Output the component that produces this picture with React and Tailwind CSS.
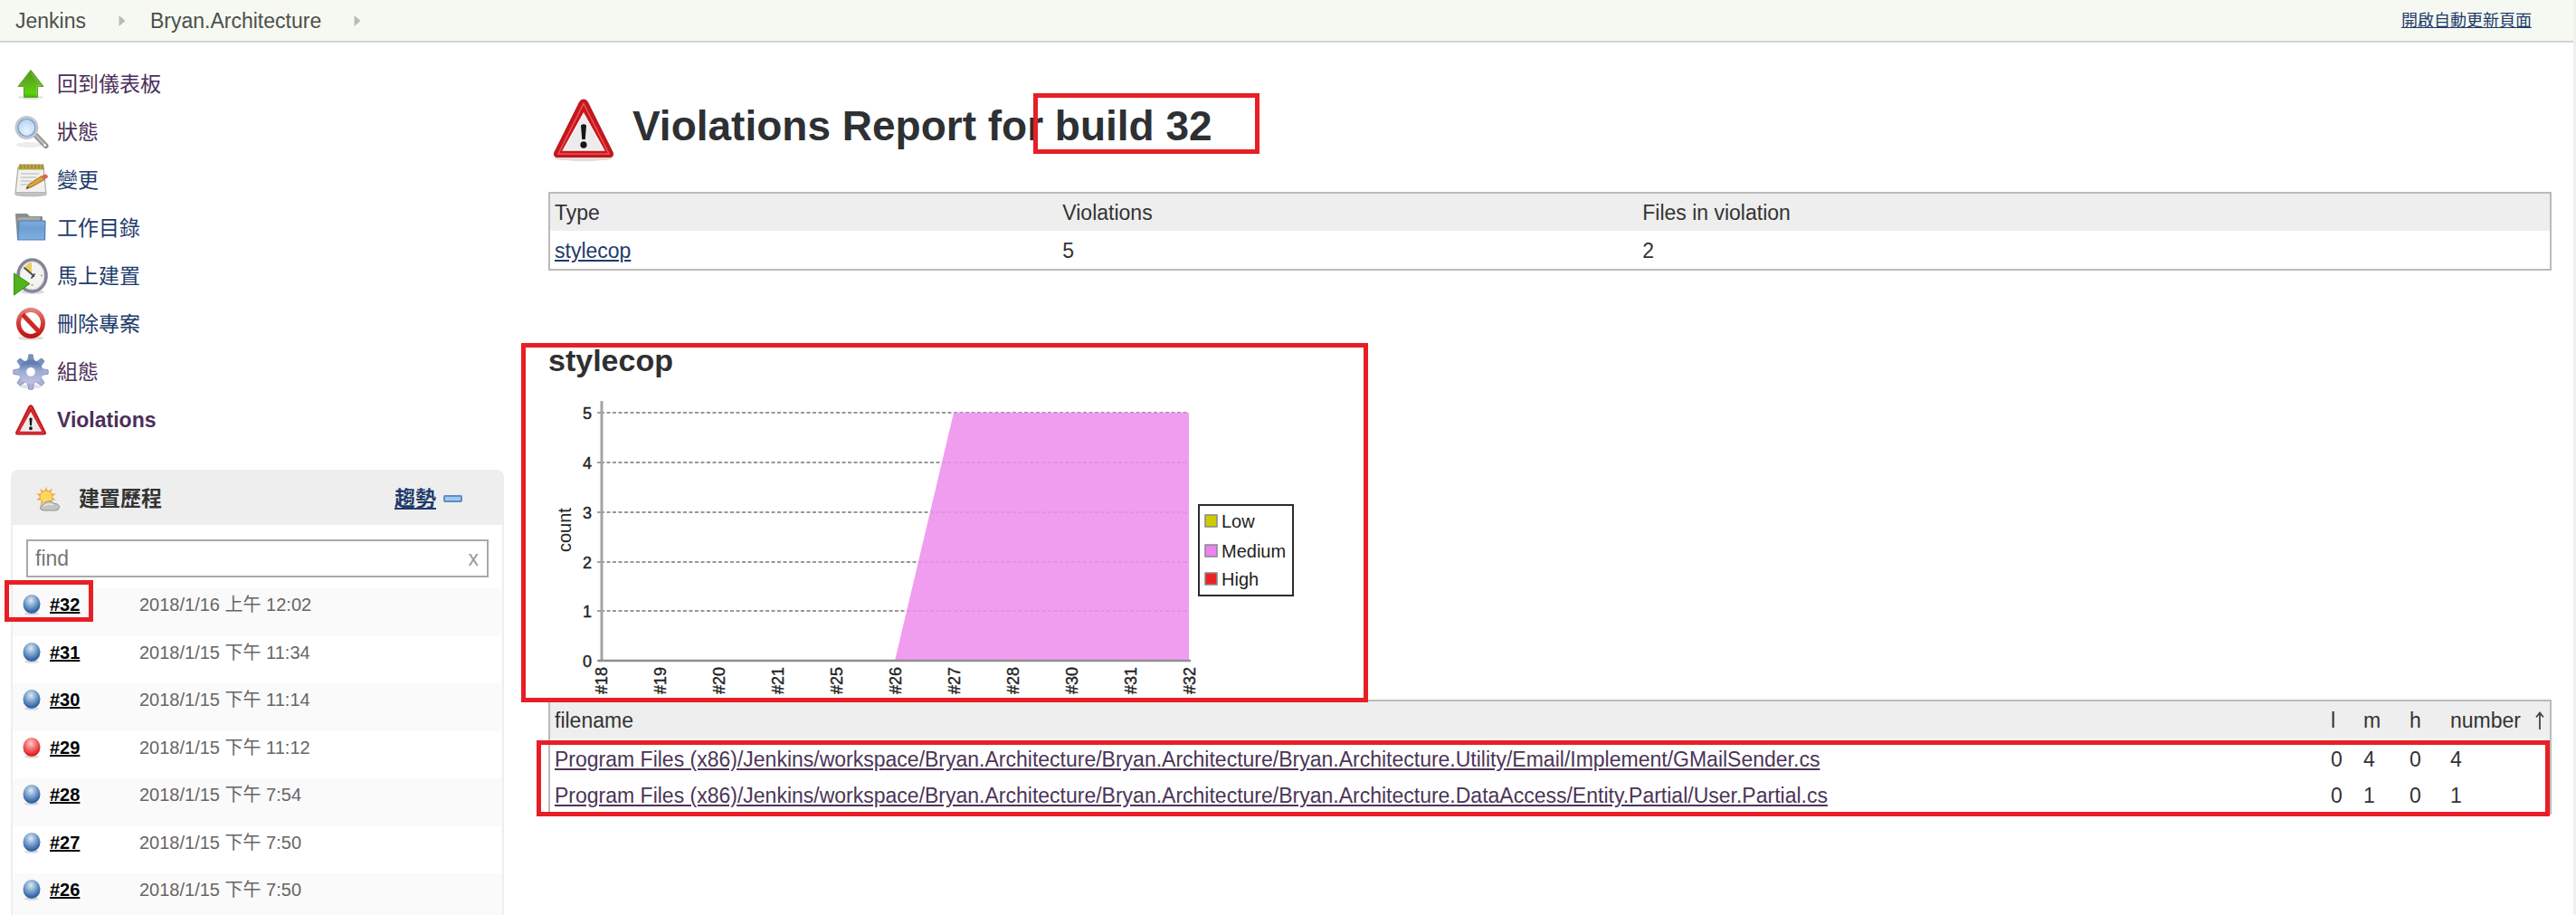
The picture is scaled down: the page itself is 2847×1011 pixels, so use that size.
import React from "react";

const SANS = "font-['Liberation_Sans','Noto_Sans_CJK_TC',sans-serif]";

/* ---------- icons ---------- */

function NavSvg({ children }) {
  return (
    <svg viewBox="0 0 38 40" className="h-10 w-[38px] shrink-0 overflow-visible" aria-hidden="true">
      {children}
    </svg>
  );
}

function UpIcon() {
  return (
    <NavSvg>
      <defs>
        <linearGradient id="up" x1="0" y1="0" x2="0" y2="1">
          <stop offset="0" stopColor="#4f9a16" />
          <stop offset="0.5" stopColor="#5fb31c" />
          <stop offset="0.85" stopColor="#5ad60c" />
          <stop offset="1" stopColor="#4aa80f" />
        </linearGradient>
      </defs>
      <ellipse cx="19" cy="34.500" rx="14" ry="2.500" fill="#e3e6df" />
      <path d="M19 4.500 33 22.500H26.500V34.500H11.500V22.500H5Z" fill="url(#up)" stroke="#5aa02c" strokeWidth="1" strokeLinejoin="round" />
      <path d="M19 7 30 21.500H25.500V33" fill="none" stroke="#8fd455" strokeWidth="1" opacity="0.7" />
    </NavSvg>
  );
}

function SearchIcon() {
  return (
    <NavSvg>
      <defs>
        <radialGradient id="lens" cx="0.5" cy="0.65" r="0.6">
          <stop offset="0" stopColor="#e9f3ff" />
          <stop offset="1" stopColor="#b3cff2" />
        </radialGradient>
      </defs>
      <ellipse cx="17" cy="34" rx="14" ry="3" fill="#ececec" />
      <path d="M24 23 35.500 35" stroke="#8d8d8d" strokeWidth="6" strokeLinecap="round" />
      <path d="M25 24 35 34.500" stroke="#b9bab8" strokeWidth="3" strokeLinecap="round" />
      <circle cx="34.500" cy="34.500" r="1.300" fill="#fff" />
      <circle cx="14.500" cy="15" r="11.500" fill="url(#lens)" stroke="#c3c7cc" strokeWidth="3" />
      <circle cx="14.500" cy="15" r="9.500" fill="none" stroke="#6f9bd1" strokeWidth="1.200" />
    </NavSvg>
  );
}

function NotepadIcon() {
  return (
    <NavSvg>
      <ellipse cx="19" cy="36.500" rx="15" ry="2" fill="#cfcfcb" />
      <path d="M5 6H33L36 35Q36 36.500 34.500 36.500H4Q2 36.500 2 35Z" fill="#f1f1ee" stroke="#a9aaa5" strokeWidth="1.200" />
      <path d="M2.500 33H35.500V35.500H2.500Z" fill="#b9bab5" />
      <path d="M6 2.500H33L34 8.500H5Z" fill="#b7a44b" />
      <path d="M8 2.500v5M12 2.500v5M16 2.500v5M20 2.500v5M24 2.500v5M28 2.500v5M32 2.500v5" stroke="#8f7d2c" strokeWidth="1" />
      <path d="M8 13H28M8 17H25M8 21H20M8 25H16" stroke="#c9c9c6" strokeWidth="1.300" />
      <path d="M14 29.500 17 24.500 31 15.500 34 19.500 20 27.500Z" fill="#e0a33c" stroke="#9c6b1a" strokeWidth="1" />
      <path d="M31 15.500 34.500 13.500Q38 13.500 38 17L34 19.500Z" fill="#d9655f" />
      <path d="M14 29.500 15.500 27 17 28.500Z" fill="#333" />
    </NavSvg>
  );
}

function FolderIcon() {
  return (
    <NavSvg>
      <defs>
        <linearGradient id="folder" x1="0" y1="0" x2="0" y2="1">
          <stop offset="0" stopColor="#7fabd9" />
          <stop offset="0.4" stopColor="#6d9fd3" />
          <stop offset="1" stopColor="#82b0de" />
        </linearGradient>
      </defs>
      <path d="M2 5Q2 4 3 4H15L18 7H31Q32 7 32 8V31H4Z" fill="#8b8d8a" />
      <path d="M5 8H29V14H5Z" fill="#a6a8a5" />
      <path d="M6 12H35L34.500 33H4.500Z" fill="url(#folder)" stroke="#4b7db8" strokeWidth="1.200" strokeLinejoin="round" />
    </NavSvg>
  );
}

function ClockIcon() {
  return (
    <NavSvg>
      <ellipse cx="21" cy="37.500" rx="13" ry="2.500" fill="#dcdcdc" />
      <ellipse cx="20.500" cy="19.500" rx="15.500" ry="17.500" fill="#f3f3ef" stroke="#83839a" strokeWidth="3.600" />
      <ellipse cx="20.500" cy="19.500" rx="13.300" ry="15.300" fill="none" stroke="#d6d6d6" strokeWidth="1" />
      <path d="M20 18 12 11Q15 5.500 20 5Z" fill="#e7cf5a" />
      <path d="M12 11 22.500 20M20 22 23 18" stroke="#4a4a4a" strokeWidth="1.800" strokeLinecap="round" />
      <circle cx="20.500" cy="30" r="1" fill="#999" />
      <circle cx="31" cy="19.500" r="1" fill="#999" />
      <path d="M0.500 17 18 28.500 0.500 41Z" fill="#4fb41c" stroke="#3c8d12" strokeWidth="1" />
    </NavSvg>
  );
}

function StopIcon() {
  return (
    <NavSvg>
      <defs>
        <linearGradient id="stop" x1="0" y1="0" x2="0" y2="1">
          <stop offset="0" stopColor="#e08078" />
          <stop offset="0.5" stopColor="#d23c38" />
          <stop offset="1" stopColor="#c31512" />
        </linearGradient>
      </defs>
      <ellipse cx="19" cy="35.500" rx="14" ry="2.500" fill="#dcdcdc" />
      <ellipse cx="19" cy="19" rx="13.500" ry="14.500" fill="#fff" stroke="url(#stop)" strokeWidth="5" />
      <path d="M10 9.500 28.500 29" stroke="#cb2a26" strokeWidth="5" />
    </NavSvg>
  );
}

function GearIcon() {
  const teeth = [0, 45, 90, 135, 180, 225, 270, 315];
  return (
    <NavSvg>
      <defs>
        <linearGradient id="gear" x1="0" y1="0" x2="0" y2="1">
          <stop offset="0" stopColor="#5f7fb2" />
          <stop offset="0.45" stopColor="#98acd3" />
          <stop offset="1" stopColor="#bcbcdf" />
        </linearGradient>
      </defs>
      <ellipse cx="19" cy="36" rx="12" ry="2.500" fill="#e2e2e2" />
      {teeth.map((a) => (
        <path
          key={a}
          d="M15.200 9 16.800 0.800H21.200L22.800 9Z"
          transform={`rotate(${a} 19 20)`}
          fill={a === 0 || a === 45 || a === 315 ? "#7690bf" : "#a9b1d8"}
          stroke="#7c8bb4"
          strokeWidth="0.800"
        />
      ))}
      <circle cx="19" cy="20" r="9.500" fill="none" stroke="url(#gear)" strokeWidth="8" />
      <circle cx="19" cy="20" r="5.300" fill="#fff" stroke="#8d99c2" strokeWidth="0.800" />
    </NavSvg>
  );
}

function WarningShape() {
  return (
    <>
      <path d="M34 7Q37 7 38.500 10L66 65Q68 70.500 63 70.500H5Q0 70.500 2 65L29.500 10Q31 7 34 7Z" fill="#c9161b" stroke="#a51216" strokeWidth="1" />
      <path d="M34 11.500 62 67H6Z" fill="none" stroke="#e4575a" strokeWidth="1.500" />
      <path d="M34 22.500 56.500 63H11.500Z" fill="#ececec" stroke="#f7f7f7" strokeWidth="1.500" />
      <path d="M31 35.500Q34 33 37 35.500L35.800 51H32.200Z" fill="#161616" />
      <ellipse cx="34" cy="57" rx="3.600" ry="3.800" fill="#161616" />
    </>
  );
}

function WarningIcon() {
  return (
    <NavSvg>
      <svg x="2" y="3" width="34" height="34" viewBox="1 6 66 66">
        <WarningShape />
      </svg>
    </NavSvg>
  );
}

function WarningLarge() {
  return (
    <svg viewBox="0 0 68 72" className="h-[72px] w-[68px] shrink-0 overflow-visible" aria-hidden="true">
      <ellipse cx="34" cy="72" rx="32" ry="3" fill="#ead9d9" />
      <WarningShape />
    </svg>
  );
}

function WeatherIcon() {
  const rays = [0, 36, 72, 108, 144, 180, 216, 252, 288, 324];
  return (
    <svg viewBox="0 0 28 28" className="h-7 w-7 shrink-0" aria-hidden="true">
      {rays.map((a) => (
        <path key={a} d="M11.500 5.500 13 0.500 14.500 5.500Z" transform={`rotate(${a} 13 12)`} fill="#f2a33a" />
      ))}
      <circle cx="13" cy="12" r="7" fill="#fbd860" stroke="#eda53b" strokeWidth="1" />
      <path d="M10 27Q6.500 27 6.500 23.500Q7 20.500 10.500 20.500Q12 16.500 16.500 17Q20 16 21.500 19.500Q27 19 27.500 23.500Q27 27 23.500 27Z" fill="#c4c5c1" stroke="#8e908c" strokeWidth="1" />
      <path d="M10 22Q16 18.500 21 21" stroke="#e6e7e4" strokeWidth="1.500" fill="none" />
    </svg>
  );
}

function Ball({ red }) {
  return (
    <svg viewBox="0 0 20 24" className="h-6 w-5 shrink-0" aria-hidden="true">
      <defs>
        <radialGradient id="ballBlue" cx="0.45" cy="0.3" r="0.7">
          <stop offset="0" stopColor="#dfeaf2" />
          <stop offset="0.45" stopColor="#7fa6cf" />
          <stop offset="0.85" stopColor="#3568a8" />
          <stop offset="1" stopColor="#3465a4" />
        </radialGradient>
        <radialGradient id="ballRed" cx="0.45" cy="0.3" r="0.7">
          <stop offset="0" stopColor="#ffd0d0" />
          <stop offset="0.45" stopColor="#f56f6f" />
          <stop offset="0.85" stopColor="#e32626" />
          <stop offset="1" stopColor="#d42020" />
        </radialGradient>
      </defs>
      <ellipse cx="10" cy="22" rx="8" ry="1.800" fill="#d9d9d9" />
      <ellipse cx="10" cy="11.500" rx="9.500" ry="10.500" fill={red ? "url(#ballRed)" : "url(#ballBlue)"} />
    </svg>
  );
}

function Crumb() {
  return (
    <svg viewBox="0 0 8 12" className="h-3 w-2" aria-hidden="true">
      <path d="M0.500 0 7.500 6 0.500 12Z" fill="#b9bbb7" />
    </svg>
  );
}

/* ---------- data ---------- */

const VISITED = "text-[#4b2f59]";
const FRESH = "text-[#1f3b6b]";

const nav = [
  { label: "回到儀表板", Icon: UpIcon, tone: VISITED },
  { label: "狀態", Icon: SearchIcon, tone: VISITED },
  { label: "變更", Icon: NotepadIcon, tone: FRESH },
  { label: "工作目錄", Icon: FolderIcon, tone: FRESH },
  { label: "馬上建置", Icon: ClockIcon, tone: FRESH },
  { label: "刪除專案", Icon: StopIcon, tone: FRESH },
  { label: "組態", Icon: GearIcon, tone: VISITED },
  { label: "Violations", Icon: WarningIcon, tone: VISITED, bold: true },
];

const builds = [
  { id: "#32", date: "2018/1/16 上午 12:02", marked: true },
  { id: "#31", date: "2018/1/15 下午 11:34" },
  { id: "#30", date: "2018/1/15 下午 11:14" },
  { id: "#29", date: "2018/1/15 下午 11:12", red: true },
  { id: "#28", date: "2018/1/15 下午 7:54" },
  { id: "#27", date: "2018/1/15 下午 7:50" },
  { id: "#26", date: "2018/1/15 下午 7:50" },
];

const files = [
  {
    name: "Program Files (x86)/Jenkins/workspace/Bryan.Architecture/Bryan.Architecture/Bryan.Architecture.Utility/Email/Implement/GMailSender.cs",
    counts: [0, 4, 0, 4],
  },
  {
    name: "Program Files (x86)/Jenkins/workspace/Bryan.Architecture/Bryan.Architecture/Bryan.Architecture.DataAccess/Entity.Partial/User.Partial.cs",
    counts: [0, 1, 0, 1],
  },
];

const ticks = ["#18", "#19", "#20", "#21", "#25", "#26", "#27", "#28", "#30", "#31", "#32"];

/* ---------- parts ---------- */

function Header() {
  return (
    <header className="flex h-[47px] items-center justify-between border-b-2 border-[#d3d7cf] bg-[#f6f9f2] pr-[46px] pl-[17px] text-[#4d4f4b]">
      <nav className="flex items-center" aria-label="breadcrumb">
        <a href="#jenkins">Jenkins</a>
        <span className="pr-[27px] pl-9"><Crumb /></span>
        <a href="#project">Bryan.Architecture</a>
        <span className="pl-9"><Crumb /></span>
      </nav>
      <a href="#refresh" className="text-[18px] text-[#1f3b6b] underline">開啟自動更新頁面</a>
    </header>
  );
}

function BuildHistory() {
  return (
    <section className="mt-[29px] ml-3 rounded-t-lg border-2 border-[#eeeeee]">
      <div className="flex h-[59px] items-center bg-[#eeeeee] pr-11 pl-6 text-[23px] font-bold">
        <WeatherIcon />
        <h2 className="ml-[21px] flex-1 text-[#333]">建置歷程</h2>
        <a href="#trend" className="text-[#1f3b6b] underline">趨勢</a>
        <button type="button" aria-label="collapse" className="ml-2 h-2 w-[21px] rounded-[2px] border-2 border-[#5b8dc9] bg-[#a5c6ea]" />
      </div>
      <div className="px-[15px] pt-4 pb-3">
        <div className="flex h-[42px] items-center border-2 border-[#a9a9a9] bg-white pr-[9px] pl-2">
          <input type="text" placeholder="find" aria-label="find" className="min-w-0 flex-1 outline-none placeholder:text-[#757575]" />
          <button type="button" aria-label="clear" className="text-[#999]">x</button>
        </div>
      </div>
      <ul>
        {builds.map((b) => (
          <li key={b.id} className="flex h-[52px] items-start pl-[11px] text-[20px] leading-9 odd:h-[53px] odd:bg-[#fafafa]">
            <div className="relative flex w-[129px] items-center">
              <Ball red={b.red} />
              <a href="#build" className="ml-[10px] font-bold text-black underline">{b.id}</a>
              {b.marked && <span className="pointer-events-none absolute -top-[9px] -left-[20px] h-[46px] w-[98px] border-5 border-[#e81e25]" />}
            </div>
            <span className="text-[#666]">{b.date}</span>
          </li>
        ))}
      </ul>
    </section>
  );
}

function Chart() {
  return (
    <svg viewBox="0 0 840 355" className="block h-[355px] w-[840px]" role="img" aria-label="stylecop violations per build" fontFamily="Liberation Sans, sans-serif">
      {[1, 2, 3, 4, 5].map((n) => {
        const y = 312 - Math.round(n * 54.7);
        return <path key={n} d={`M58 ${y}H708`} stroke="#777" strokeWidth="1.500" strokeDasharray="4 2.500" />;
      })}
      <path d="M383 312 448 38H708V312Z" fill="#ee8fee" opacity="0.88" />
      <path d="M59 25V312" stroke="#a3a3a3" strokeWidth="3" />
      <path d="M55 312H710" stroke="#8f8f8f" strokeWidth="2.500" />
      {[0, 1, 2, 3, 4, 5].map((n) => {
        const y = 312 - Math.round(n * 54.7);
        return (
          <g key={n}>
            <path d={`M54 ${y}H58`} stroke="#888" strokeWidth="1.500" />
            <text x="48" y={y + 7} textAnchor="end" fontSize="18" fill="#222" stroke="#222" strokeWidth="0.400">{n}</text>
          </g>
        );
      })}
      {ticks.map((t, i) => {
        const x = 58 + i * 65;
        return (
          <text key={t} transform={`translate(${x + 7} 349) rotate(-90)`} fontSize="18" fill="#222" stroke="#222" strokeWidth="0.400">{t}</text>
        );
      })}
      <text transform="translate(25 192) rotate(-90)" fontSize="20" fill="#222">count</text>
      <rect x="719" y="140" width="104" height="100" fill="#fff" stroke="#2b2b2b" strokeWidth="2" />
      <rect x="726" y="151" width="13" height="13" fill="#cccc00" stroke="#888" strokeWidth="1.500" />
      <rect x="726" y="184" width="13" height="13" fill="#ee82ee" stroke="#888" strokeWidth="1.500" />
      <rect x="726" y="215" width="13" height="13" fill="#ee2222" stroke="#888" strokeWidth="1.500" />
      <g fontSize="20" fill="#222">
        <text x="744" y="165">Low</text>
        <text x="744" y="198">Medium</text>
        <text x="744" y="229">High</text>
      </g>
    </svg>
  );
}

function SummaryTable() {
  return (
    <table className="mt-[37px] w-full table-fixed border-separate border-spacing-0 border-2 border-[#bbbbbb] text-left">
      <thead>
        <tr className="[&>th]:h-[43px] [&>th]:border-b-2 [&>th]:border-white [&>th]:bg-[#eeeeee] [&>th]:px-[5px] [&>th]:font-normal">
          <th className="w-[25.400%]">Type</th>
          <th className="w-[29%]">Violations</th>
          <th>Files in violation</th>
        </tr>
      </thead>
      <tbody>
        <tr className="[&>td]:h-10 [&>td]:px-[5px]">
          <td><a href="#stylecop" className="text-[#1f3b6b] underline">stylecop</a></td>
          <td>5</td>
          <td>2</td>
        </tr>
      </tbody>
    </table>
  );
}

function FilesTable() {
  return (
    <div className="relative">
      <table className="w-full table-fixed border-separate border-spacing-0 border-2 border-[#bbbbbb] text-left">
        <thead>
          <tr className="[&>th]:h-[43px] [&>th]:border-b-2 [&>th]:border-white [&>th]:bg-[#eeeeee] [&>th]:pr-1 [&>th]:pl-[5px] [&>th]:font-normal">
            <th>filename</th>
            <th className="w-9">l</th>
            <th className="w-[51px]">m</th>
            <th className="w-[45px]">h</th>
            <th className="w-[115px]">
              <span className="flex items-center justify-between">
                number
                <svg viewBox="0 0 12 20" className="h-5 w-3" aria-hidden="true">
                  <path d="M5 20V2M1 6.500 5 1.500 9 6.500" fill="none" stroke="#444" strokeWidth="1.800" />
                </svg>
              </span>
            </th>
          </tr>
        </thead>
        <tbody>
          {files.map((f) => (
            <tr key={f.name} className="[&>td]:h-10 [&>td]:pt-px [&>td]:pr-1 [&>td]:pl-[5px]">
              <td><a href="#file" className="text-[#4b3557] underline">{f.name}</a></td>
              {f.counts.map((c, i) => <td key={i}>{c}</td>)}
            </tr>
          ))}
        </tbody>
      </table>
      <span className="pointer-events-none absolute top-[45px] right-[2px] -bottom-[2px] -left-[13px] border-5 border-[#e81e25]" />
    </div>
  );
}

export default function App() {
  return (
    <div className={`flex h-screen flex-col overflow-hidden border-r-[3px] border-[#f0f0f0] bg-white text-[23px] leading-[26px] text-[#333] ${SANS}`}>
      <Header />
      <div className="flex min-h-0 flex-1">
        <aside className="w-[557px] shrink-0">
          <ul className="pt-[19px]">
            {nav.map(({ label, Icon, tone, bold }) => (
              <li key={label}>
                <a href="#nav" className={`flex h-[53px] items-center gap-[10px] pl-[15px] ${tone} ${bold ? "font-bold" : ""}`}>
                  <Icon />
                  {label}
                </a>
              </li>
            ))}
          </ul>
          <BuildHistory />
        </aside>
        <main className="min-w-0 flex-1 pt-14 pr-6 pl-[49px]">
          <h1 className="flex items-center gap-5 pl-[5px] text-[46px] leading-[72px] font-bold text-[#2e3033]">
            <WarningLarge />
            <span>
              Violations Report for{" "}
              <span className="relative">
                build 32
                <span className="pointer-events-none absolute top-[-10px] -right-[52px] -left-[24px] h-[67px] border-5 border-[#e81e25]" />
              </span>
            </span>
          </h1>
          <SummaryTable />
          <section className="relative z-10 mt-[79px]">
            <h2 className="text-[34px] leading-10 font-bold text-[#2e3033]">stylecop</h2>
            <Chart />
            <span className="pointer-events-none absolute top-px -left-[30px] h-[397px] w-[936px] border-5 border-[#e81e25]" />
          </section>
          <FilesTable />
        </main>
      </div>
    </div>
  );
}
